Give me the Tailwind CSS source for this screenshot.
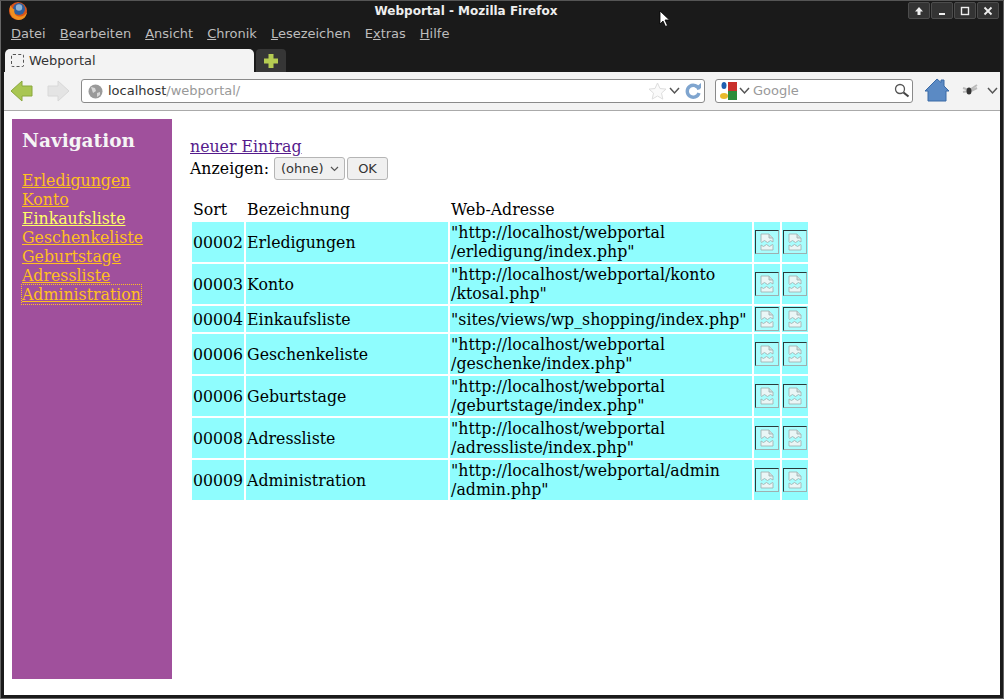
<!DOCTYPE html>
<html lang="de">
<head>
<meta charset="UTF-8">
<title>Webportal - Mozilla Firefox</title>
<script src="https://cdn.jsdelivr.net/npm/@tailwindcss/browser@4"></script>
</head>
<body class="m-0 overflow-hidden bg-[#1a1a1a]">
<svg class="hidden">
  <symbol id="broken" viewBox="0 0 16 18">
    <path d="M2 1h8l4 4v4l-2.500-1.500-3 2-3-2-3 2L2 8.500z" fill="#eaf6f6" stroke="#a3b3b3" stroke-width=".9"/>
    <path d="M10 1v4h4" fill="#cfdcdc" stroke="#a3b3b3" stroke-width=".9"/>
    <path d="M2 12l2.500 1.500 3-2 3 2 3-2 .5.300V17H2z" fill="#eaf6f6" stroke="#a3b3b3" stroke-width=".9"/>
  </symbol>
</svg>
<div class="relative w-[1004px] h-[699px] flex flex-col bg-[#1a1a1a] border-t border-t-[#555] font-['DejaVu_Sans',sans-serif]">

  <!-- title bar -->
  <div class="h-[21px] shrink-0 flex items-center relative">
    <svg class="absolute left-[8px] top-[0px]" width="20" height="20" viewBox="0 0 20 20">
      <circle cx="10" cy="10" r="9" fill="#d8541a"/>
      <circle cx="11" cy="8" r="6" fill="#2f5f9e"/>
      <circle cx="11" cy="6.500" r="3.200" fill="#8fb2d4"/>
      <path d="M2.500 4c-2 6 0 14 8 15 4.500 0 8-3 8.500-8-1.500 3-4.500 5-8 4.500-3.500-.5-5.500-3.500-4.500-7-2-.5-3.500-2.500-4-4.500z" fill="#f0901f"/>
    </svg>
    <div class="w-full text-center text-[12px] font-bold text-[#eeeeee] pr-[72px] leading-[21px]">Webportal - Mozilla Firefox</div>
    <div class="absolute right-[5px] top-[1px] flex gap-[1px]">
      <div class="w-[22px] h-[17px] rounded-[2px] bg-[#333] border border-[#4c4c4c] flex items-center justify-center">
        <svg width="10" height="10" viewBox="0 0 10 10"><path d="M5 1L1 5.500h2.500V9h3V5.500H9z" fill="#eee"/></svg>
      </div>
      <div class="w-[22px] h-[17px] rounded-[2px] bg-[#333] border border-[#4c4c4c] flex items-center justify-center">
        <svg width="10" height="10" viewBox="0 0 10 10"><rect x="2" y="7" width="6" height="2" fill="#eee"/></svg>
      </div>
      <div class="w-[22px] h-[17px] rounded-[2px] bg-[#333] border border-[#4c4c4c] flex items-center justify-center">
        <svg width="10" height="10" viewBox="0 0 10 10"><rect x="1.500" y="1.500" width="7" height="7" fill="none" stroke="#eee" stroke-width="1.400"/></svg>
      </div>
      <div class="w-[22px] h-[17px] rounded-[2px] bg-[#333] border border-[#4c4c4c] flex items-center justify-center">
        <svg width="10" height="10" viewBox="0 0 10 10"><path d="M1.500 1.500l7 7M8.500 1.500l-7 7" stroke="#eee" stroke-width="1.800"/></svg>
      </div>
    </div>
  </div>

  <!-- menu bar -->
  <div class="h-[24px] shrink-0 flex items-center pl-[11px] gap-[14px] text-[13px] text-[#bdbdbd] leading-[22px]">
    <span><span class="underline">D</span>atei</span>
    <span><span class="underline">B</span>earbeiten</span>
    <span><span class="underline">A</span>nsicht</span>
    <span><span class="underline">C</span>hronik</span>
    <span><span class="underline">L</span>esezeichen</span>
    <span>E<span class="underline">x</span>tras</span>
    <span><span class="underline">H</span>ilfe</span>
  </div>

  <!-- tabs -->
  <div class="h-[26px] shrink-0 flex items-end pl-[5px] gap-[2px]">
    <div class="w-[249px] h-[23px] rounded-t-[5px] bg-[#f3f3f3] flex items-center pl-[6px] gap-[5px] text-[13px] text-[#333]">
      <span class="w-[13px] h-[13px] rounded-[2px] border border-dashed border-[#555]"></span>
      <span>Webportal</span>
    </div>
    <div class="w-[30px] h-[23px] rounded-t-[4px] bg-[#363636] flex items-center justify-center">
      <svg width="16" height="16" viewBox="0 0 16 16"><path d="M5.500 1h5v4.500h4.500v5h-4.500v4.500h-5v-4.500h-4.500v-5h4.500z" fill="#b5cc52"/></svg>
    </div>
  </div>

  <!-- nav bar -->
  <div class="h-[39px] shrink-0 mx-[4px] bg-[#f3f3f3] border-b border-b-[#aaa] flex items-center relative">
    <svg class="ml-[6px]" width="24" height="22" viewBox="0 0 24 22"><path d="M12 1v5h10v10H12v5L1 11z" fill="#a9c652" stroke="#8aa83c"/></svg>
    <svg class="ml-[12px]" width="24" height="22" viewBox="0 0 24 22"><path d="M12 1v5H2v10h10v5l11-10z" fill="#e4e4e4" stroke="#d8d8d8"/></svg>
    <div class="absolute left-[77px] top-[7px] w-[624px] h-[24px] rounded-[3px] bg-white border border-[#8a8a8a] flex items-center pl-[6px] text-[13px]">
      <svg width="15" height="15" viewBox="0 0 15 15"><circle cx="7.500" cy="7.500" r="7" fill="#9a9a9a"/><path d="M3 3l4 1 1 3-3 2zM9 9l3-1 0 3-3 2z" fill="#d8d8d8"/></svg>
      <span class="ml-[5px] text-[#333]">localhost</span><span class="text-[#999]">/webportal/</span>
      <svg class="absolute left-[566px] top-[2px]" width="19" height="18" viewBox="0 0 19 18"><path d="M9.500 1l2.500 5.500 6 .6-4.500 4 1.300 6-5.300-3.100-5.300 3.100 1.300-6-4.500-4 6-.6z" fill="#fafafa" stroke="#ddd"/></svg>
      <svg class="absolute left-[587px] top-[7px]" width="11" height="8" viewBox="0 0 11 8"><path d="M1 1l4.500 5L10 1" fill="none" stroke="#555" stroke-width="1.500"/></svg>
      <svg class="absolute left-[603px] top-[3px]" width="16" height="16" viewBox="0 0 16 16"><path d="M14 6.500A6 6 0 1 0 14 10" fill="none" stroke="#7fa5cf" stroke-width="3.400"/><path d="M10 5h6V0z" fill="#7fa5cf"/></svg>
    </div>
    <div class="absolute left-[711px] top-[7px] w-[198px] h-[24px] rounded-[3px] bg-white border border-[#8a8a8a] flex items-center pl-[3px] text-[13px] text-[#999]">
      <svg width="18" height="18" viewBox="0 0 18 18"><rect x="9" y="0" width="9" height="9" fill="#c9302c"/><rect x="9" y="9" width="9" height="9" fill="#2e8b3a"/><rect x="0" y="5" width="9" height="7" fill="#fff"/><ellipse cx="5" cy="3.500" rx="2.500" ry="3.500" fill="#1f5fb0"/><ellipse cx="5" cy="14" rx="4" ry="3" fill="#e8b92c"/></svg>
      <svg class="ml-[2px]" width="11" height="8" viewBox="0 0 11 8"><path d="M1 1l4.500 5L10 1" fill="none" stroke="#555" stroke-width="1.500"/></svg>
      <span class="ml-[3px]">Google</span>
      <svg class="absolute right-[2px] top-[3px]" width="16" height="16" viewBox="0 0 16 16"><circle cx="6" cy="6" r="4.500" fill="#fff" stroke="#555" stroke-width="1.300"/><path d="M9.500 9.500l5 4" stroke="#444" stroke-width="2.200"/></svg>
    </div>
    <svg class="absolute left-[921px] top-[6px]" width="24" height="24" viewBox="0 0 24 24"><path d="M12 1l4 3.500V2h3v6l5 5h-3v10H3V13H0z" fill="#5b8ac4" stroke="#3a6aa6"/></svg>
    <svg class="absolute left-[958px] top-[10px]" width="16" height="16" viewBox="0 0 16 16"><path d="M1 6l6 2M1 10l6-1M15 3L9 7M15 6L9 9" stroke="#bbb" stroke-width="2"/><ellipse cx="7" cy="9" rx="2.500" ry="3.500" fill="#333"/></svg>
    <svg class="absolute left-[983px] top-[15px]" width="11" height="8" viewBox="0 0 11 8"><path d="M1 1l4.500 5L10 1" fill="none" stroke="#555" stroke-width="1.500"/></svg>
  </div>

  <!-- page -->
  <div class="flex-1 mx-[4px] mb-[4px] bg-white flex font-['DejaVu_Serif',serif] text-[15.75px] leading-[19px] text-black">
    <div class="w-[160px] h-[560px] ml-[8px] mt-[8px] bg-[#a0509c] pl-[10px] shrink-0">
      <h3 class="text-[18.5px] font-bold leading-[22px] text-[#f5f5f5] mt-[11px] mb-[19px]">Navigation</h3>
      <div class="flex flex-col items-start text-[#ffc020]">
        <a href="#" class="underline">Erledigungen</a>
        <a href="#" class="underline">Konto</a>
        <a href="#" class="underline text-[#ffff66]">Einkaufsliste</a>
        <a href="#" class="underline">Geschenkeliste</a>
        <a href="#" class="underline">Geburtstage</a>
        <a href="#" class="underline">Adressliste</a>
        <a href="#" class="underline outline-1 outline-dotted outline-[#ffc020]">Administration</a>
      </div>
    </div>
    <div class="ml-[18px] mt-[26px]">
      <a href="#" class="underline text-[#551a8b] block">neuer Eintrag</a>
      <div class="flex items-center h-[23px] mt-[1px]">
        <span>Anzeigen:</span>
        <div class="ml-[5px] w-[71px] h-[23px] rounded-[3px] border border-[#b5b5b5] bg-[#f0f0f0] flex items-center pl-[6px] text-[13px] font-['DejaVu_Sans',sans-serif] text-[#333]">
          (ohne)
          <svg class="ml-[6px]" width="9" height="6" viewBox="0 0 9 6"><path d="M1 1l3.500 3.500L8 1" fill="none" stroke="#555" stroke-width="1.200"/></svg>
        </div>
        <div class="ml-[2px] w-[41px] h-[23px] rounded-[3px] border border-[#b5b5b5] bg-[#f0f0f0] flex items-center justify-center text-[13px] font-['DejaVu_Sans',sans-serif] text-[#333]">OK</div>
      </div>
      <table class="mt-[17px] border-separate border-spacing-[2px] text-left">
        <thead>
          <tr>
            <th class="font-normal p-[1px] w-[52px]">Sort</th>
            <th class="font-normal p-[1px] w-[202px]">Bezeichnung</th>
            <th class="font-normal p-[1px] w-[302px]">Web-Adresse</th>
            <th class="p-[1px] w-[26px]"></th>
            <th class="p-[1px] w-[26px]"></th>
          </tr>
        </thead>
        <tbody>
          <tr>
            <td class="bg-[#8ffdfe] p-[1px]">00002</td>
            <td class="bg-[#8ffdfe] p-[1px]">Erledigungen</td>
            <td class="bg-[#8ffdfe] p-[1px]">"http://localhost/webportal<br>/erledigung/index.php"</td>
            <td class="bg-[#8ffdfe] p-[1px]"><div class="w-[24px] h-[24px] border border-[#9fb0b0] border-t-[#2a3a3a] border-l-[#2a3a3a] bg-[#a8fdfd] flex items-center justify-center"><svg width="16" height="18"><use href="#broken"/></svg></div></td>
            <td class="bg-[#8ffdfe] p-[1px]"><div class="w-[24px] h-[24px] border border-[#9fb0b0] border-t-[#2a3a3a] border-l-[#2a3a3a] bg-[#a8fdfd] flex items-center justify-center"><svg width="16" height="18"><use href="#broken"/></svg></div></td>
          </tr>
          <tr>
            <td class="bg-[#8ffdfe] p-[1px]">00003</td>
            <td class="bg-[#8ffdfe] p-[1px]">Konto</td>
            <td class="bg-[#8ffdfe] p-[1px]">"http://localhost/webportal/konto<br>/ktosal.php"</td>
            <td class="bg-[#8ffdfe] p-[1px]"><div class="w-[24px] h-[24px] border border-[#9fb0b0] border-t-[#2a3a3a] border-l-[#2a3a3a] bg-[#a8fdfd] flex items-center justify-center"><svg width="16" height="18"><use href="#broken"/></svg></div></td>
            <td class="bg-[#8ffdfe] p-[1px]"><div class="w-[24px] h-[24px] border border-[#9fb0b0] border-t-[#2a3a3a] border-l-[#2a3a3a] bg-[#a8fdfd] flex items-center justify-center"><svg width="16" height="18"><use href="#broken"/></svg></div></td>
          </tr>
          <tr>
            <td class="bg-[#8ffdfe] p-[1px]">00004</td>
            <td class="bg-[#8ffdfe] p-[1px]">Einkaufsliste</td>
            <td class="bg-[#8ffdfe] p-[1px]">"sites/views/wp_shopping/index.php"</td>
            <td class="bg-[#8ffdfe] p-[1px]"><div class="w-[24px] h-[24px] border border-[#9fb0b0] border-t-[#2a3a3a] border-l-[#2a3a3a] bg-[#a8fdfd] flex items-center justify-center"><svg width="16" height="18"><use href="#broken"/></svg></div></td>
            <td class="bg-[#8ffdfe] p-[1px]"><div class="w-[24px] h-[24px] border border-[#9fb0b0] border-t-[#2a3a3a] border-l-[#2a3a3a] bg-[#a8fdfd] flex items-center justify-center"><svg width="16" height="18"><use href="#broken"/></svg></div></td>
          </tr>
          <tr>
            <td class="bg-[#8ffdfe] p-[1px]">00006</td>
            <td class="bg-[#8ffdfe] p-[1px]">Geschenkeliste</td>
            <td class="bg-[#8ffdfe] p-[1px]">"http://localhost/webportal<br>/geschenke/index.php"</td>
            <td class="bg-[#8ffdfe] p-[1px]"><div class="w-[24px] h-[24px] border border-[#9fb0b0] border-t-[#2a3a3a] border-l-[#2a3a3a] bg-[#a8fdfd] flex items-center justify-center"><svg width="16" height="18"><use href="#broken"/></svg></div></td>
            <td class="bg-[#8ffdfe] p-[1px]"><div class="w-[24px] h-[24px] border border-[#9fb0b0] border-t-[#2a3a3a] border-l-[#2a3a3a] bg-[#a8fdfd] flex items-center justify-center"><svg width="16" height="18"><use href="#broken"/></svg></div></td>
          </tr>
          <tr>
            <td class="bg-[#8ffdfe] p-[1px]">00006</td>
            <td class="bg-[#8ffdfe] p-[1px]">Geburtstage</td>
            <td class="bg-[#8ffdfe] p-[1px]">"http://localhost/webportal<br>/geburtstage/index.php"</td>
            <td class="bg-[#8ffdfe] p-[1px]"><div class="w-[24px] h-[24px] border border-[#9fb0b0] border-t-[#2a3a3a] border-l-[#2a3a3a] bg-[#a8fdfd] flex items-center justify-center"><svg width="16" height="18"><use href="#broken"/></svg></div></td>
            <td class="bg-[#8ffdfe] p-[1px]"><div class="w-[24px] h-[24px] border border-[#9fb0b0] border-t-[#2a3a3a] border-l-[#2a3a3a] bg-[#a8fdfd] flex items-center justify-center"><svg width="16" height="18"><use href="#broken"/></svg></div></td>
          </tr>
          <tr>
            <td class="bg-[#8ffdfe] p-[1px]">00008</td>
            <td class="bg-[#8ffdfe] p-[1px]">Adressliste</td>
            <td class="bg-[#8ffdfe] p-[1px]">"http://localhost/webportal<br>/adressliste/index.php"</td>
            <td class="bg-[#8ffdfe] p-[1px]"><div class="w-[24px] h-[24px] border border-[#9fb0b0] border-t-[#2a3a3a] border-l-[#2a3a3a] bg-[#a8fdfd] flex items-center justify-center"><svg width="16" height="18"><use href="#broken"/></svg></div></td>
            <td class="bg-[#8ffdfe] p-[1px]"><div class="w-[24px] h-[24px] border border-[#9fb0b0] border-t-[#2a3a3a] border-l-[#2a3a3a] bg-[#a8fdfd] flex items-center justify-center"><svg width="16" height="18"><use href="#broken"/></svg></div></td>
          </tr>
          <tr>
            <td class="bg-[#8ffdfe] p-[1px]">00009</td>
            <td class="bg-[#8ffdfe] p-[1px]">Administration</td>
            <td class="bg-[#8ffdfe] p-[1px]">"http://localhost/webportal/admin<br>/admin.php"</td>
            <td class="bg-[#8ffdfe] p-[1px]"><div class="w-[24px] h-[24px] border border-[#9fb0b0] border-t-[#2a3a3a] border-l-[#2a3a3a] bg-[#a8fdfd] flex items-center justify-center"><svg width="16" height="18"><use href="#broken"/></svg></div></td>
            <td class="bg-[#8ffdfe] p-[1px]"><div class="w-[24px] h-[24px] border border-[#9fb0b0] border-t-[#2a3a3a] border-l-[#2a3a3a] bg-[#a8fdfd] flex items-center justify-center"><svg width="16" height="18"><use href="#broken"/></svg></div></td>
          </tr>
        </tbody>
      </table>
    </div>
  </div>

  <!-- window edge + mouse cursor -->
  <div class="absolute inset-0 border-x border-b border-[#666] pointer-events-none"></div>
  <svg class="absolute left-[659px] top-[9px]" width="12" height="18" viewBox="0 0 12 18"><path d="M1 1v13l3-3 2.500 5.500 2-1L6 10h4.500z" fill="#fff" stroke="#000" stroke-width=".8"/></svg>
</div>
</body>
</html>
